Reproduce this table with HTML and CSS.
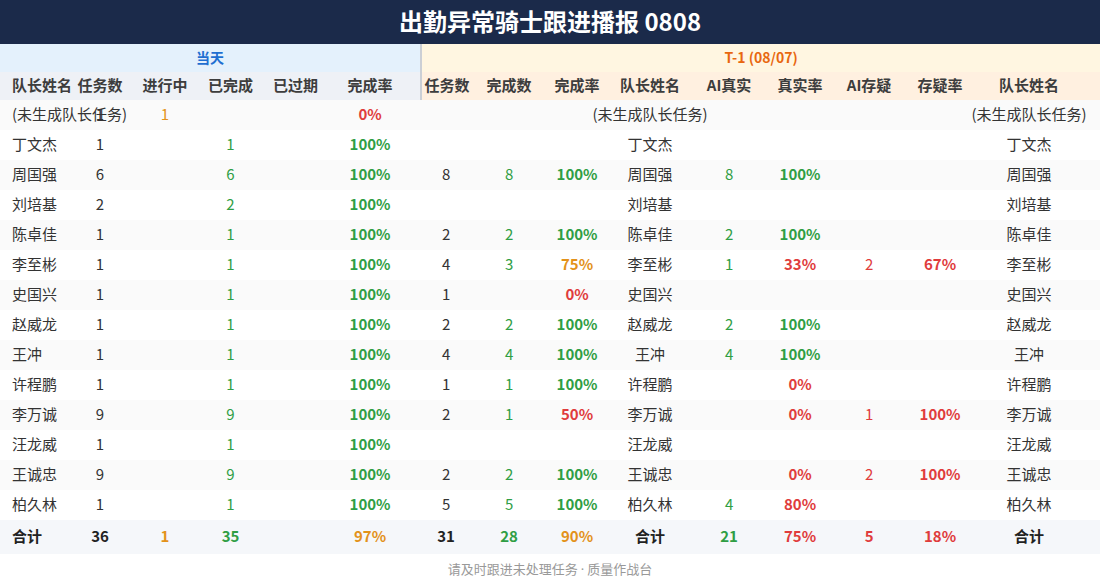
FILE: index.html
```html
<!DOCTYPE html>
<html lang="zh-CN">
<head>
<meta charset="utf-8">
<title>出勤异常骑士跟进播报 0808</title>
<link rel="stylesheet" href="styles.css">
</head>
<body>
<div class="page">
  <header class="title-bar">出勤异常骑士跟进播报 0808</header>
  <table class="report">
    <colgroup>
      <col class="w68"><col class="w64"><col class="w66"><col class="w65"><col class="w65"><col class="w92">
      <col class="w52"><col class="w74"><col class="w62"><col class="w84"><col class="w74"><col class="w68"><col class="w70"><col class="w72"><col class="w124">
    </colgroup>
    <thead>
      <tr class="group-row">
        <th colspan="6" class="grp-today">当天</th>
        <th colspan="9" class="grp-prev sep">T-1 (08/07)</th>
      </tr>
      <tr class="head-row">
        <th class="h-today name-l">队长姓名</th>
        <th class="h-today">任务数</th>
        <th class="h-today">进行中</th>
        <th class="h-today">已完成</th>
        <th class="h-today">已过期</th>
        <th class="h-today pr8">完成率</th>
        <th class="h-prev sep">任务数</th>
        <th class="h-prev">完成数</th>
        <th class="h-prev">完成率</th>
        <th class="h-prev">队长姓名</th>
        <th class="h-prev">AI真实</th>
        <th class="h-prev">真实率</th>
        <th class="h-prev">AI存疑</th>
        <th class="h-prev">存疑率</th>
        <th class="h-prev pr18">队长姓名</th>
      </tr>
    </thead>
    <tbody>
      <tr>
        <td class="name-l">(未生成队长任务)</td><td>1</td><td class="o">1</td><td></td><td></td><td class="pr8 r b">0%</td>
        <td></td><td></td><td></td><td><div class="nc">(未生成队长任务)</div></td><td></td><td></td><td></td><td></td><td class="pr18"><div class="nc">(未生成队长任务)</div></td>
      </tr>
      <tr>
        <td class="name-l">丁文杰</td><td>1</td><td></td><td class="g">1</td><td></td><td class="pr8 g b">100%</td>
        <td></td><td></td><td></td><td><div class="nc">丁文杰</div></td><td></td><td></td><td></td><td></td><td class="pr18"><div class="nc">丁文杰</div></td>
      </tr>
      <tr>
        <td class="name-l">周国强</td><td>6</td><td></td><td class="g">6</td><td></td><td class="pr8 g b">100%</td>
        <td>8</td><td class="g">8</td><td class="g b">100%</td><td><div class="nc">周国强</div></td><td class="g">8</td><td class="g b">100%</td><td></td><td></td><td class="pr18"><div class="nc">周国强</div></td>
      </tr>
      <tr>
        <td class="name-l">刘培基</td><td>2</td><td></td><td class="g">2</td><td></td><td class="pr8 g b">100%</td>
        <td></td><td></td><td></td><td><div class="nc">刘培基</div></td><td></td><td></td><td></td><td></td><td class="pr18"><div class="nc">刘培基</div></td>
      </tr>
      <tr>
        <td class="name-l">陈卓佳</td><td>1</td><td></td><td class="g">1</td><td></td><td class="pr8 g b">100%</td>
        <td>2</td><td class="g">2</td><td class="g b">100%</td><td><div class="nc">陈卓佳</div></td><td class="g">2</td><td class="g b">100%</td><td></td><td></td><td class="pr18"><div class="nc">陈卓佳</div></td>
      </tr>
      <tr>
        <td class="name-l">李至彬</td><td>1</td><td></td><td class="g">1</td><td></td><td class="pr8 g b">100%</td>
        <td>4</td><td class="g">3</td><td class="o b">75%</td><td><div class="nc">李至彬</div></td><td class="g">1</td><td class="r b">33%</td><td class="r">2</td><td class="r b">67%</td><td class="pr18"><div class="nc">李至彬</div></td>
      </tr>
      <tr>
        <td class="name-l">史国兴</td><td>1</td><td></td><td class="g">1</td><td></td><td class="pr8 g b">100%</td>
        <td>1</td><td></td><td class="r b">0%</td><td><div class="nc">史国兴</div></td><td></td><td></td><td></td><td></td><td class="pr18"><div class="nc">史国兴</div></td>
      </tr>
      <tr>
        <td class="name-l">赵威龙</td><td>1</td><td></td><td class="g">1</td><td></td><td class="pr8 g b">100%</td>
        <td>2</td><td class="g">2</td><td class="g b">100%</td><td><div class="nc">赵威龙</div></td><td class="g">2</td><td class="g b">100%</td><td></td><td></td><td class="pr18"><div class="nc">赵威龙</div></td>
      </tr>
      <tr>
        <td class="name-l">王冲</td><td>1</td><td></td><td class="g">1</td><td></td><td class="pr8 g b">100%</td>
        <td>4</td><td class="g">4</td><td class="g b">100%</td><td><div class="nc">王冲</div></td><td class="g">4</td><td class="g b">100%</td><td></td><td></td><td class="pr18"><div class="nc">王冲</div></td>
      </tr>
      <tr>
        <td class="name-l">许程鹏</td><td>1</td><td></td><td class="g">1</td><td></td><td class="pr8 g b">100%</td>
        <td>1</td><td class="g">1</td><td class="g b">100%</td><td><div class="nc">许程鹏</div></td><td></td><td class="r b">0%</td><td></td><td></td><td class="pr18"><div class="nc">许程鹏</div></td>
      </tr>
      <tr>
        <td class="name-l">李万诚</td><td>9</td><td></td><td class="g">9</td><td></td><td class="pr8 g b">100%</td>
        <td>2</td><td class="g">1</td><td class="r b">50%</td><td><div class="nc">李万诚</div></td><td></td><td class="r b">0%</td><td class="r">1</td><td class="r b">100%</td><td class="pr18"><div class="nc">李万诚</div></td>
      </tr>
      <tr>
        <td class="name-l">汪龙威</td><td>1</td><td></td><td class="g">1</td><td></td><td class="pr8 g b">100%</td>
        <td></td><td></td><td></td><td><div class="nc">汪龙威</div></td><td></td><td></td><td></td><td></td><td class="pr18"><div class="nc">汪龙威</div></td>
      </tr>
      <tr>
        <td class="name-l">王诚忠</td><td>9</td><td></td><td class="g">9</td><td></td><td class="pr8 g b">100%</td>
        <td>2</td><td class="g">2</td><td class="g b">100%</td><td><div class="nc">王诚忠</div></td><td></td><td class="r b">0%</td><td class="r">2</td><td class="r b">100%</td><td class="pr18"><div class="nc">王诚忠</div></td>
      </tr>
      <tr>
        <td class="name-l">柏久林</td><td>1</td><td></td><td class="g">1</td><td></td><td class="pr8 g b">100%</td>
        <td>5</td><td class="g">5</td><td class="g b">100%</td><td><div class="nc">柏久林</div></td><td class="g">4</td><td class="r b">80%</td><td></td><td></td><td class="pr18"><div class="nc">柏久林</div></td>
      </tr>
    </tbody>
    <tfoot>
      <tr class="total-row">
        <td class="name-l">合计</td><td>36</td><td class="o">1</td><td class="g">35</td><td></td><td class="pr8 o">97%</td>
        <td>31</td><td class="g">28</td><td class="o">90%</td><td><div class="nc">合计</div></td><td class="g">21</td><td class="r">75%</td><td class="r">5</td><td class="r">18%</td><td class="pr18"><div class="nc">合计</div></td>
      </tr>
    </tfoot>
  </table>
  <footer class="foot">请及时跟进未处理任务 <span class="dot">·</span> 质量作战台</footer>
</div>
</body>
</html>
```
FILE: styles.css
```css
html, body {
  margin: 0;
  padding: 0;
  background: #ffffff;
}
body {
  font-family: "Noto Sans CJK SC", "Noto Sans", sans-serif;
  color: #333333;
}
.page {
  width: 1100px;
}
.title-bar {
  height: 44px;
  line-height: 42px;
  padding-bottom: 2px;
  box-sizing: border-box;
  background: #1b2a4a;
  color: #ffffff;
  font-size: 24px;
  font-weight: 700;
  text-align: center;
}
.report {
  width: 1100px;
  table-layout: fixed;
  border-collapse: separate;
  border-spacing: 0;
  font-size: 15px;
}
.w52 { width: 52px; }
.w62 { width: 62px; }
.w64 { width: 64px; }
.w65 { width: 65px; }
.w66 { width: 66px; }
.w68 { width: 68px; }
.w70 { width: 70px; }
.w72 { width: 72px; }
.w74 { width: 74px; }
.w84 { width: 84px; }
.w92 { width: 92px; }
.w124 { width: 124px; }

.report th,
.report td {
  padding: 0 0 3px 0;
  text-align: center;
  vertical-align: middle;
  white-space: nowrap;
  box-sizing: border-box;
}
.group-row th {
  height: 28px;
  font-size: 14px;
  font-weight: 700;
}
.grp-today {
  background: #e4f1fc;
  color: #1f6fd1;
}
.grp-prev {
  background: #fff6e1;
  color: #e8670f;
}
.head-row th {
  height: 28px;
  font-size: 15px;
  font-weight: 700;
  color: #3d3d3d;
}
.h-today { background: #eef1f6; }
.h-prev { background: #fff0e0; }
.sep { border-left: 2px solid #cbcfd5; }

.report tbody td {
  height: 30px;
}
.report tbody tr:nth-child(odd) td {
  background: #fafafa;
}
.report .name-l {
  text-align: left;
  padding-left: 12px;
}
.pr8 { padding-right: 8px !important; }
.pr18 { padding-right: 18px !important; }
.nc {
  display: flex;
  justify-content: center;
  white-space: nowrap;
}
.g { color: #2f9e44; }
.r { color: #e03c3c; }
.o { color: #e3921a; }
.b { font-weight: 700; }

.total-row td {
  height: 34px;
  background: #f5f7fa;
  font-weight: 700;
  color: #222222;
}
.total-row td.g { color: #2f9e44; }
.total-row td.r { color: #e03c3c; }
.total-row td.o { color: #e3921a; }

.foot {
  height: 32px;
  line-height: 30px;
  text-align: center;
  font-size: 13px;
  color: #999999;
}
.dot {
  font-family: "Noto Sans", sans-serif;
}
```
